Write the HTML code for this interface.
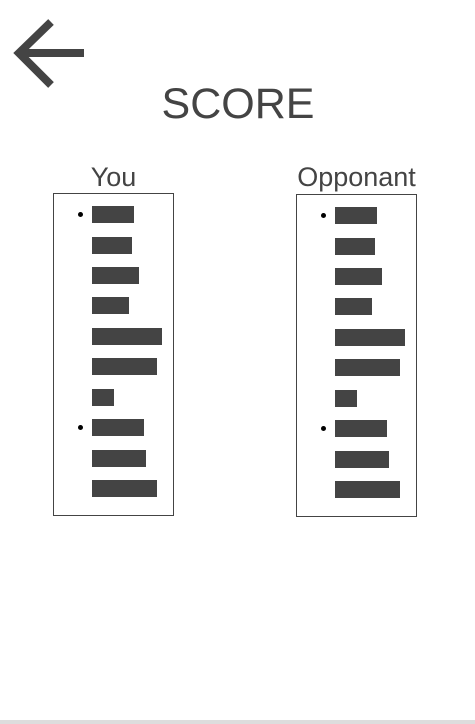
<!DOCTYPE html>
<html><head><style>
body{margin:0;width:475px;height:724px;background:#fff;position:relative;overflow:hidden;font-family:"Liberation Sans",sans-serif;color:#444}
.t{position:absolute;white-space:nowrap;text-align:center}
.box{position:absolute;width:119px;height:321px;border:1px solid #444}
.b{position:absolute;height:17px;background:#444}
.d{position:absolute;width:5px;height:5px;border-radius:50%;background:#000}
.g{position:absolute;left:0;bottom:0;width:475px;height:4px;background:#ddd}
</style></head><body>
<svg style="position:absolute;left:0;top:0" width="100" height="100"><path d="M84 53H22M51 22L19 53L51 85" stroke="#444" stroke-width="8" fill="none"/></svg>
<div class="t" style="left:138px;width:200px;top:80px;font-size:43px">SCORE</div>
<div class="t" style="left:43px;width:141px;top:162px;font-size:27px">You</div>
<div class="t" style="left:276px;width:161px;top:162px;font-size:27px">Opponant</div>
<div class="box" style="left:53px;top:193px"></div>
<div class="box" style="left:296px;top:194px"></div>
<div id="L"></div>
<script>
var w=[42,40,47,37,70,65,22,52,54,65],y=[206,237,267,297,328,358,389,419,450,480],h='';
[[92,0],[335,1]].forEach(function(c){for(var i=0;i<10;i++){h+='<div class="b" style="left:'+c[0]+'px;top:'+(y[i]+c[1])+'px;width:'+w[i]+'px"></div>';}
h+='<div class="d" style="left:'+(c[0]-14)+'px;top:'+(212+c[1])+'px"></div><div class="d" style="left:'+(c[0]-14)+'px;top:'+(425+c[1])+'px"></div>';});
document.getElementById('L').innerHTML=h;
</script>
<div class="g"></div>
</body></html>
